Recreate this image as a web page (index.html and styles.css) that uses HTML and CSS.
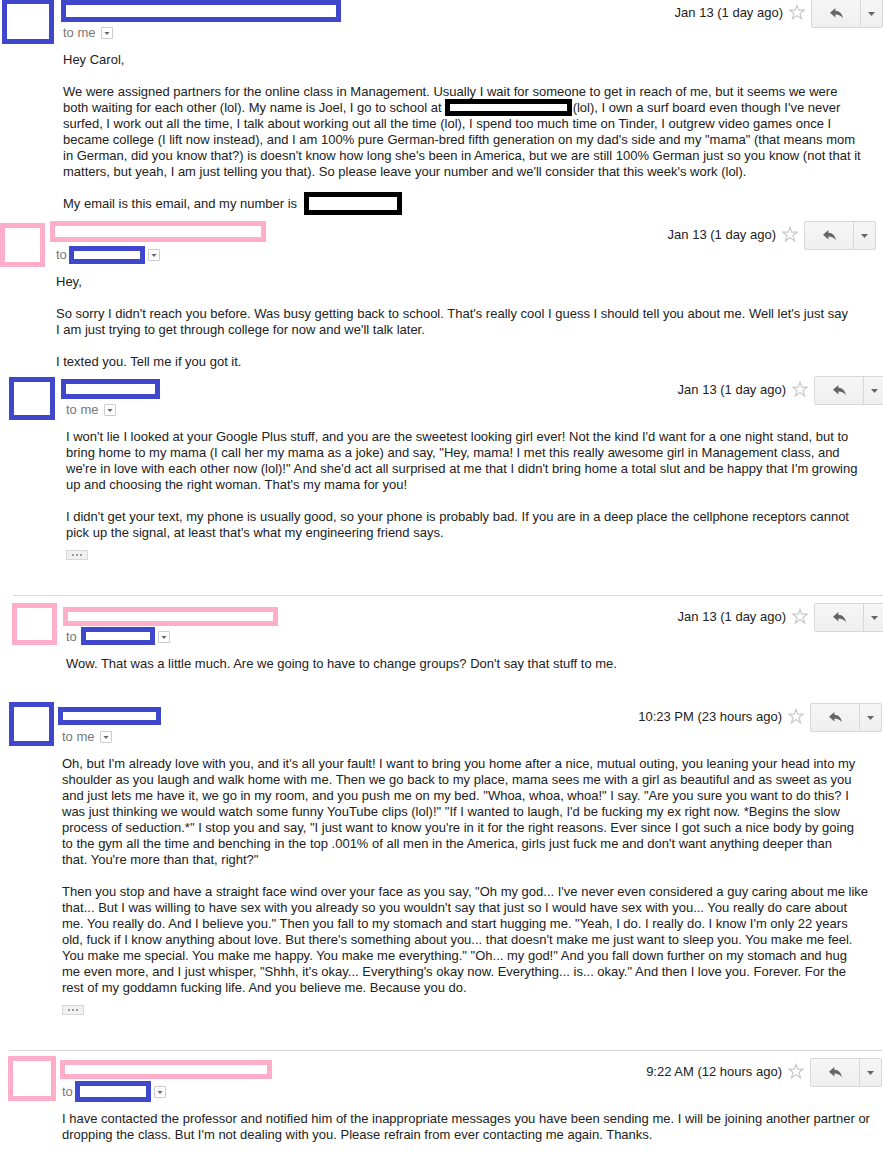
FILE: index.html
```html
<!DOCTYPE html>
<html lang="en">
<head>
<meta charset="utf-8">
<title>Conversation</title>
<link rel="stylesheet" href="styles.css">
</head>
<body>
<svg class="sprite" aria-hidden="true">
  <symbol id="star" viewBox="0 0 16 16"><path d="M8 1.4 9.8 6.1H15.2L10.9 9.4 12.6 15 8 11.6 3.4 15 5.1 9.4 0.8 6.1H6.2Z" fill="#fff" stroke="#cacaca" stroke-width="1.2"/></symbol>
  <symbol id="reply" viewBox="0 0 13 11"><path d="M0 4.7 5.4 0V2.7C9.6 2.9 12.4 5.6 13 10.6 11 7.6 8.6 6.6 5.4 6.6V9.4Z" fill="#666"/></symbol>
  <symbol id="down" viewBox="0 0 7 4"><path d="M0 0H7L3.5 4Z" fill="#666"/></symbol>
</svg>
<main class="thread">

  <article class="message m1">
    <div class="avatar blue"></div>
    <div class="content">
      <header class="head">
        <div class="who">
          <div class="name"><span class="mask blue"></span></div>
          <div class="to"><span>to me</span><button class="details" aria-label="Show details"><svg><use href="#down"/></svg></button></div>
        </div>
        <div class="meta"><time>Jan 13 (1 day ago)</time><button class="star" aria-label="Star"><svg><use href="#star"/></svg></button><div class="actions"><button class="reply" aria-label="Reply"><svg><use href="#reply"/></svg></button><button class="more" aria-label="More"><svg><use href="#down"/></svg></button></div></div>
      </header>
      <div class="body">
        <p>Hey Carol,</p>
        <p>We were assigned partners for the online class in Management. Usually I wait for someone to get in reach of me, but it seems we were<br>both waiting for each other (lol). My name is Joel, I go to school at<span class="mask black school"></span>(lol), I own a surf board even though I've never<br>surfed, I work out all the time, I talk about working out all the time (lol), I spend too much time on Tinder, I outgrew video games once I<br>became college (I lift now instead), and I am 100% pure German-bred fifth generation on my dad's side and my "mama" (that means mom<br>in German, did you know that?) is doesn't know how long she's been in America, but we are still 100% German just so you know (not that it<br>matters, but yeah, I am just telling you that). So please leave your number and we'll consider that this week's work (lol).</p>
        <p>My email is this email, and my number is<span class="mask black phone"></span></p>
      </div>
    </div>
  </article>

  <article class="message m2">
    <div class="avatar pink"></div>
    <div class="content">
      <header class="head">
        <div class="who">
          <div class="name"><span class="mask pink"></span></div>
          <div class="to"><span>to</span><span class="mask blue"></span><button class="details" aria-label="Show details"><svg><use href="#down"/></svg></button></div>
        </div>
        <div class="meta"><time>Jan 13 (1 day ago)</time><button class="star" aria-label="Star"><svg><use href="#star"/></svg></button><div class="actions"><button class="reply" aria-label="Reply"><svg><use href="#reply"/></svg></button><button class="more" aria-label="More"><svg><use href="#down"/></svg></button></div></div>
      </header>
      <div class="body">
        <p>Hey,</p>
        <p>So sorry I didn't reach you before. Was busy getting back to school. That's really cool I guess I should tell you about me. Well let's just say<br>I am just trying to get through college for now and we'll talk later.</p>
        <p>I texted you. Tell me if you got it.</p>
      </div>
    </div>
  </article>

  <article class="message m3">
    <div class="avatar blue"></div>
    <div class="content">
      <header class="head">
        <div class="who">
          <div class="name"><span class="mask blue"></span></div>
          <div class="to"><span>to me</span><button class="details" aria-label="Show details"><svg><use href="#down"/></svg></button></div>
        </div>
        <div class="meta"><time>Jan 13 (1 day ago)</time><button class="star" aria-label="Star"><svg><use href="#star"/></svg></button><div class="actions"><button class="reply" aria-label="Reply"><svg><use href="#reply"/></svg></button><button class="more" aria-label="More"><svg><use href="#down"/></svg></button></div></div>
      </header>
      <div class="body">
        <p>I won't lie I looked at your Google Plus stuff, and you are the sweetest looking girl ever! Not the kind I'd want for a one night stand, but to<br>bring home to my mama (I call her my mama as a joke) and say, "Hey, mama! I met this really awesome girl in Management class, and<br>we're in love with each other now (lol)!" And she'd act all surprised at me that I didn't bring home a total slut and be happy that I'm growing<br>up and choosing the right woman. That's my mama for you!</p>
        <p>I didn't get your text, my phone is usually good, so your phone is probably bad. If you are in a deep place the cellphone receptors cannot<br>pick up the signal, at least that's what my engineering friend says.</p>
      </div>
      <button class="trimmed" aria-label="Show trimmed content"><i></i><i></i><i></i></button>
    </div>
  </article>

  <hr class="rule wide">

  <article class="message m4">
    <div class="avatar pink"></div>
    <div class="content">
      <header class="head">
        <div class="who">
          <div class="name"><span class="mask pink"></span></div>
          <div class="to"><span>to</span><span class="mask blue"></span><button class="details" aria-label="Show details"><svg><use href="#down"/></svg></button></div>
        </div>
        <div class="meta"><time>Jan 13 (1 day ago)</time><button class="star" aria-label="Star"><svg><use href="#star"/></svg></button><div class="actions"><button class="reply" aria-label="Reply"><svg><use href="#reply"/></svg></button><button class="more" aria-label="More"><svg><use href="#down"/></svg></button></div></div>
      </header>
      <div class="body">
        <p>Wow. That was a little much. Are we going to have to change groups? Don't say that stuff to me.</p>
      </div>
    </div>
  </article>

  <article class="message m5">
    <div class="avatar blue"></div>
    <div class="content">
      <header class="head">
        <div class="who">
          <div class="name"><span class="mask blue"></span></div>
          <div class="to"><span>to me</span><button class="details" aria-label="Show details"><svg><use href="#down"/></svg></button></div>
        </div>
        <div class="meta"><time>10:23 PM (23 hours ago)</time><button class="star" aria-label="Star"><svg><use href="#star"/></svg></button><div class="actions"><button class="reply" aria-label="Reply"><svg><use href="#reply"/></svg></button><button class="more" aria-label="More"><svg><use href="#down"/></svg></button></div></div>
      </header>
      <div class="body">
        <p>Oh, but I'm already love with you, and it's all your fault! I want to bring you home after a nice, mutual outing, you leaning your head into my<br>shoulder as you laugh and walk home with me. Then we go back to my place, mama sees me with a girl as beautiful and as sweet as you<br>and just lets me have it, we go in my room, and you push me on my bed. "Whoa, whoa, whoa!" I say. "Are you sure you want to do this? I<br>was just thinking we would watch some funny YouTube clips (lol)!" "If I wanted to laugh, I'd be fucking my ex right now. *Begins the slow<br>process of seduction.*" I stop you and say, "I just want to know you're in it for the right reasons. Ever since I got such a nice body by going<br>to the gym all the time and benching in the top .001% of all men in the America, girls just fuck me and don't want anything deeper than<br>that. You're more than that, right?"</p>
        <p>Then you stop and have a straight face wind over your face as you say, "Oh my god... I've never even considered a guy caring about me like<br>that... But I was willing to have sex with you already so you wouldn't say that just so I would have sex with you... You really do care about<br>me. You really do. And I believe you." Then you fall to my stomach and start hugging me. "Yeah, I do. I really do. I know I'm only 22 years<br>old, fuck if I know anything about love. But there's something about you... that doesn't make me just want to sleep you. You make me feel.<br>You make me special. You make me happy. You make me everything." "Oh... my god!" And you fall down further on my stomach and hug<br>me even more, and I just whisper, "Shhh, it's okay... Everything's okay now. Everything... is... okay." And then I love you. Forever. For the<br>rest of my goddamn fucking life. And you believe me. Because you do.</p>
      </div>
      <button class="trimmed" aria-label="Show trimmed content"><i></i><i></i><i></i></button>
    </div>
  </article>

  <hr class="rule">

  <article class="message m6">
    <div class="avatar pink"></div>
    <div class="content">
      <header class="head">
        <div class="who">
          <div class="name"><span class="mask pink"></span></div>
          <div class="to"><span>to</span><span class="mask blue"></span><button class="details" aria-label="Show details"><svg><use href="#down"/></svg></button></div>
        </div>
        <div class="meta"><time>9:22 AM (12 hours ago)</time><button class="star" aria-label="Star"><svg><use href="#star"/></svg></button><div class="actions"><button class="reply" aria-label="Reply"><svg><use href="#reply"/></svg></button><button class="more" aria-label="More"><svg><use href="#down"/></svg></button></div></div>
      </header>
      <div class="body">
        <p>I have contacted the professor and notified him of the inappropriate messages you have been sending me. I will be joining another partner or<br>dropping the class. But I'm not dealing with you. Please refrain from ever contacting me again. Thanks.</p>
      </div>
    </div>
  </article>

</main>
</body>
</html>
```
FILE: styles.css
```css
* { box-sizing: border-box; }

body {
  margin: 0;
  background: #fff;
  color: #222;
  font: 13px/16px "Liberation Sans", Arial, sans-serif;
  overflow-x: hidden;
}

.sprite { position: absolute; width: 0; height: 0; }
svg { display: block; }
button { margin: 0; padding: 0; border: 0; background: none; font: inherit; cursor: pointer; }

.thread { display: flow-root; padding-bottom: 12px; overflow: hidden; }

/* Message layout: avatar column, then header and body */
.message { display: grid; grid-template-columns: 63px minmax(0, 1fr); align-items: start; }
.head { display: flex; justify-content: space-between; height: 53px; }
.name { display: flex; align-items: flex-start; height: 26px; }
.to { display: flex; align-items: center; height: 16px; color: #777; }
.meta { display: flex; align-items: center; height: 29px; white-space: nowrap; }
.meta time { padding-bottom: 2px; }
.body { white-space: nowrap; }
.body p { margin: 0; }
.body p + p { margin-top: 16px; }

/* Redaction boxes */
.avatar, .mask { flex: none; border: 5px solid; background: #fff; }
.blue { border-color: #3f48cc; }
.pink { border-color: #ffaec9; }
.black { border-color: #000; }
.avatar { width: 45px; height: 44px; }
.to .mask { width: 76px; height: 18px; margin-left: 2px; }
.body .mask { display: inline-block; vertical-align: middle; }
.body .school { width: 127px; height: 17px; margin: -5px 1px -3px 3px; }
.body .phone { width: 98px; height: 23px; margin: -9px 0 -7px 7px; }

/* Controls */
.details { display: grid; place-items: center; width: 12px; height: 12px; margin-left: 5px; border: 1px solid #ccc; border-radius: 1px; }
.mask + .details { margin-left: 3px; }
.details svg { width: 6px; height: 3px; }
.star { margin: 0 6px; padding-bottom: 4px; }
.star svg { width: 16px; height: 16px; }
.actions { display: flex; width: 72px; height: 29px; border: 1px solid #d8d8d8; border-radius: 2px; background: linear-gradient(#f6f6f6, #efefef); }
.reply, .more { display: grid; place-items: center; }
.reply { flex: 1; }
.reply svg { width: 13px; height: 11px; }
.more { width: 22px; border-left: 1px solid #d8d8d8; }
.more svg { width: 7px; height: 4px; }
.trimmed { display: flex; justify-content: center; align-items: center; gap: 2px; width: 22px; height: 10px; margin-top: 9px; border: 1px solid #d8d8d8; background: #f1f1f1; }
.trimmed i { width: 2px; height: 2px; background: #999; }
.rule { height: 1px; margin: 35px 1px 7px 9px; border: 0; background: #d8d8d8; }
.rule.wide { margin-left: 13px; margin-right: 0; }

/* Per-message column widths and redaction sizes */
.m1 { margin-top: -1px; }
.m1 .avatar { width: 52px; height: 45px; margin-left: 2px; }
.m1 .name .mask { width: 280px; height: 22px; margin: 1px 0 0 -2px; }

.m2 { grid-template-columns: 56px minmax(0, 1fr); margin: 9px 7px 0 0; }
.m2 .avatar { margin-top: 2px; }
.m2 .name .mask { width: 216px; height: 21px; margin-left: -6px; }

.m3, .m4 { grid-template-columns: 66px minmax(0, 1fr); margin-right: -3px; }
.m3 { margin-top: 6px; }
.m3 .avatar { width: 46px; height: 43px; margin: 1px 0 0 9px; }
.m3 .name .mask { width: 99px; height: 20px; margin: 3px 0 0 -5px; }

.m4 .avatar { height: 42px; margin-left: 12px; }
.m4 .name .mask { width: 215px; height: 19px; margin: 4px 0 0 -3px; }
.m4 .to .mask { width: 74px; margin: 0 0 2px 4px; }

.m5, .m6 { grid-template-columns: 62px minmax(0, 1fr); margin-right: 1px; }
.m5 { margin-top: 31px; }
.m5 .avatar { margin: -1px 0 0 9px; }
.m5 .name .mask { width: 103px; height: 18px; margin: 4px 0 0 -4px; }

.m6 .avatar { width: 48px; height: 45px; margin: -2px 0 0 8px; }
.m6 .name .mask { width: 212px; height: 19px; margin: 2px 0 0 -2px; }
.m6 .to .mask { height: 21px; margin-bottom: 2px; }
```
